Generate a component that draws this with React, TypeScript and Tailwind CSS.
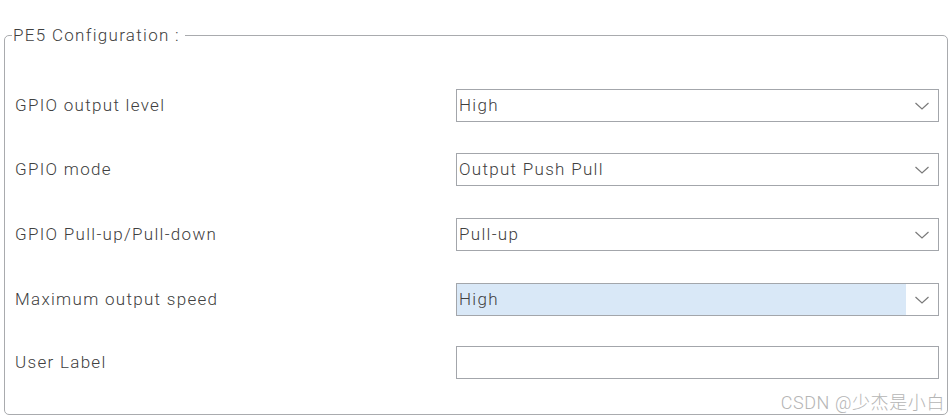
import React from "react";

const Chevron = () => (
  <svg width="16" height="10" viewBox="0 0 16 10" fill="none">
    <path d="M1.5 2 L8 8 L14.5 2" stroke="#7a7a7a" strokeWidth="1.2" />
  </svg>
);

const txt = "text-[17px] font-light tracking-[1.3px] text-[#404040]";

function Select({ value, highlight }: { value?: string; highlight?: boolean }) {
  return (
    <div className="flex h-[33px] w-[483px] border border-[#a3a6ab] bg-white">
      <div
        className={
          "flex flex-1 items-center pl-[2px] " + txt + " " +
          (highlight ? "bg-[#d9e8f7]" : "")
        }
      >
        {value}
      </div>
      {value !== undefined && (
        <div className="flex w-[32px] items-center justify-center">
          <Chevron />
        </div>
      )}
    </div>
  );
}

const rows: { label: string; value?: string; highlight?: boolean; mt: string }[] = [
  { label: "GPIO output level", value: "High", mt: "mt-0" },
  { label: "GPIO mode", value: "Output Push Pull", mt: "mt-[31px]" },
  { label: "GPIO Pull-up/Pull-down", value: "Pull-up", mt: "mt-[32px]" },
  { label: "Maximum output speed", value: "High", highlight: true, mt: "mt-[32px]" },
  { label: "User Label", mt: "mt-[30px]" },
];

export default function App() {
  return (
    <div
      className="relative h-[419px] w-[950px] overflow-hidden bg-white pt-[26px]"
      style={{ fontFamily: 'Roboto, "Noto Sans CJK SC", sans-serif' }}
    >
      <fieldset className="ml-[4px] h-[389px] w-[944px] rounded-[5px] border border-[#a9abae] p-0">
        <legend className={"ml-[7px] pl-[1px] pr-[5px] leading-[18px] " + txt}>
          PE5 Configuration :
        </legend>
        <div className="flex flex-col pl-[10px] pt-[45px]">
          {rows.map((r) => (
            <div key={r.label} className={"flex h-[33px] items-center " + r.mt}>
              <div className={"w-[441px] " + txt}>{r.label}</div>
              <Select value={r.value} highlight={r.highlight} />
            </div>
          ))}
        </div>
      </fieldset>
      <div className="absolute bottom-[6px] right-[5px] text-[18px] font-light leading-[20px] tracking-[0.6px] text-[#b5b5b5]">
        CSDN @少杰是小白
      </div>
    </div>
  );
}
